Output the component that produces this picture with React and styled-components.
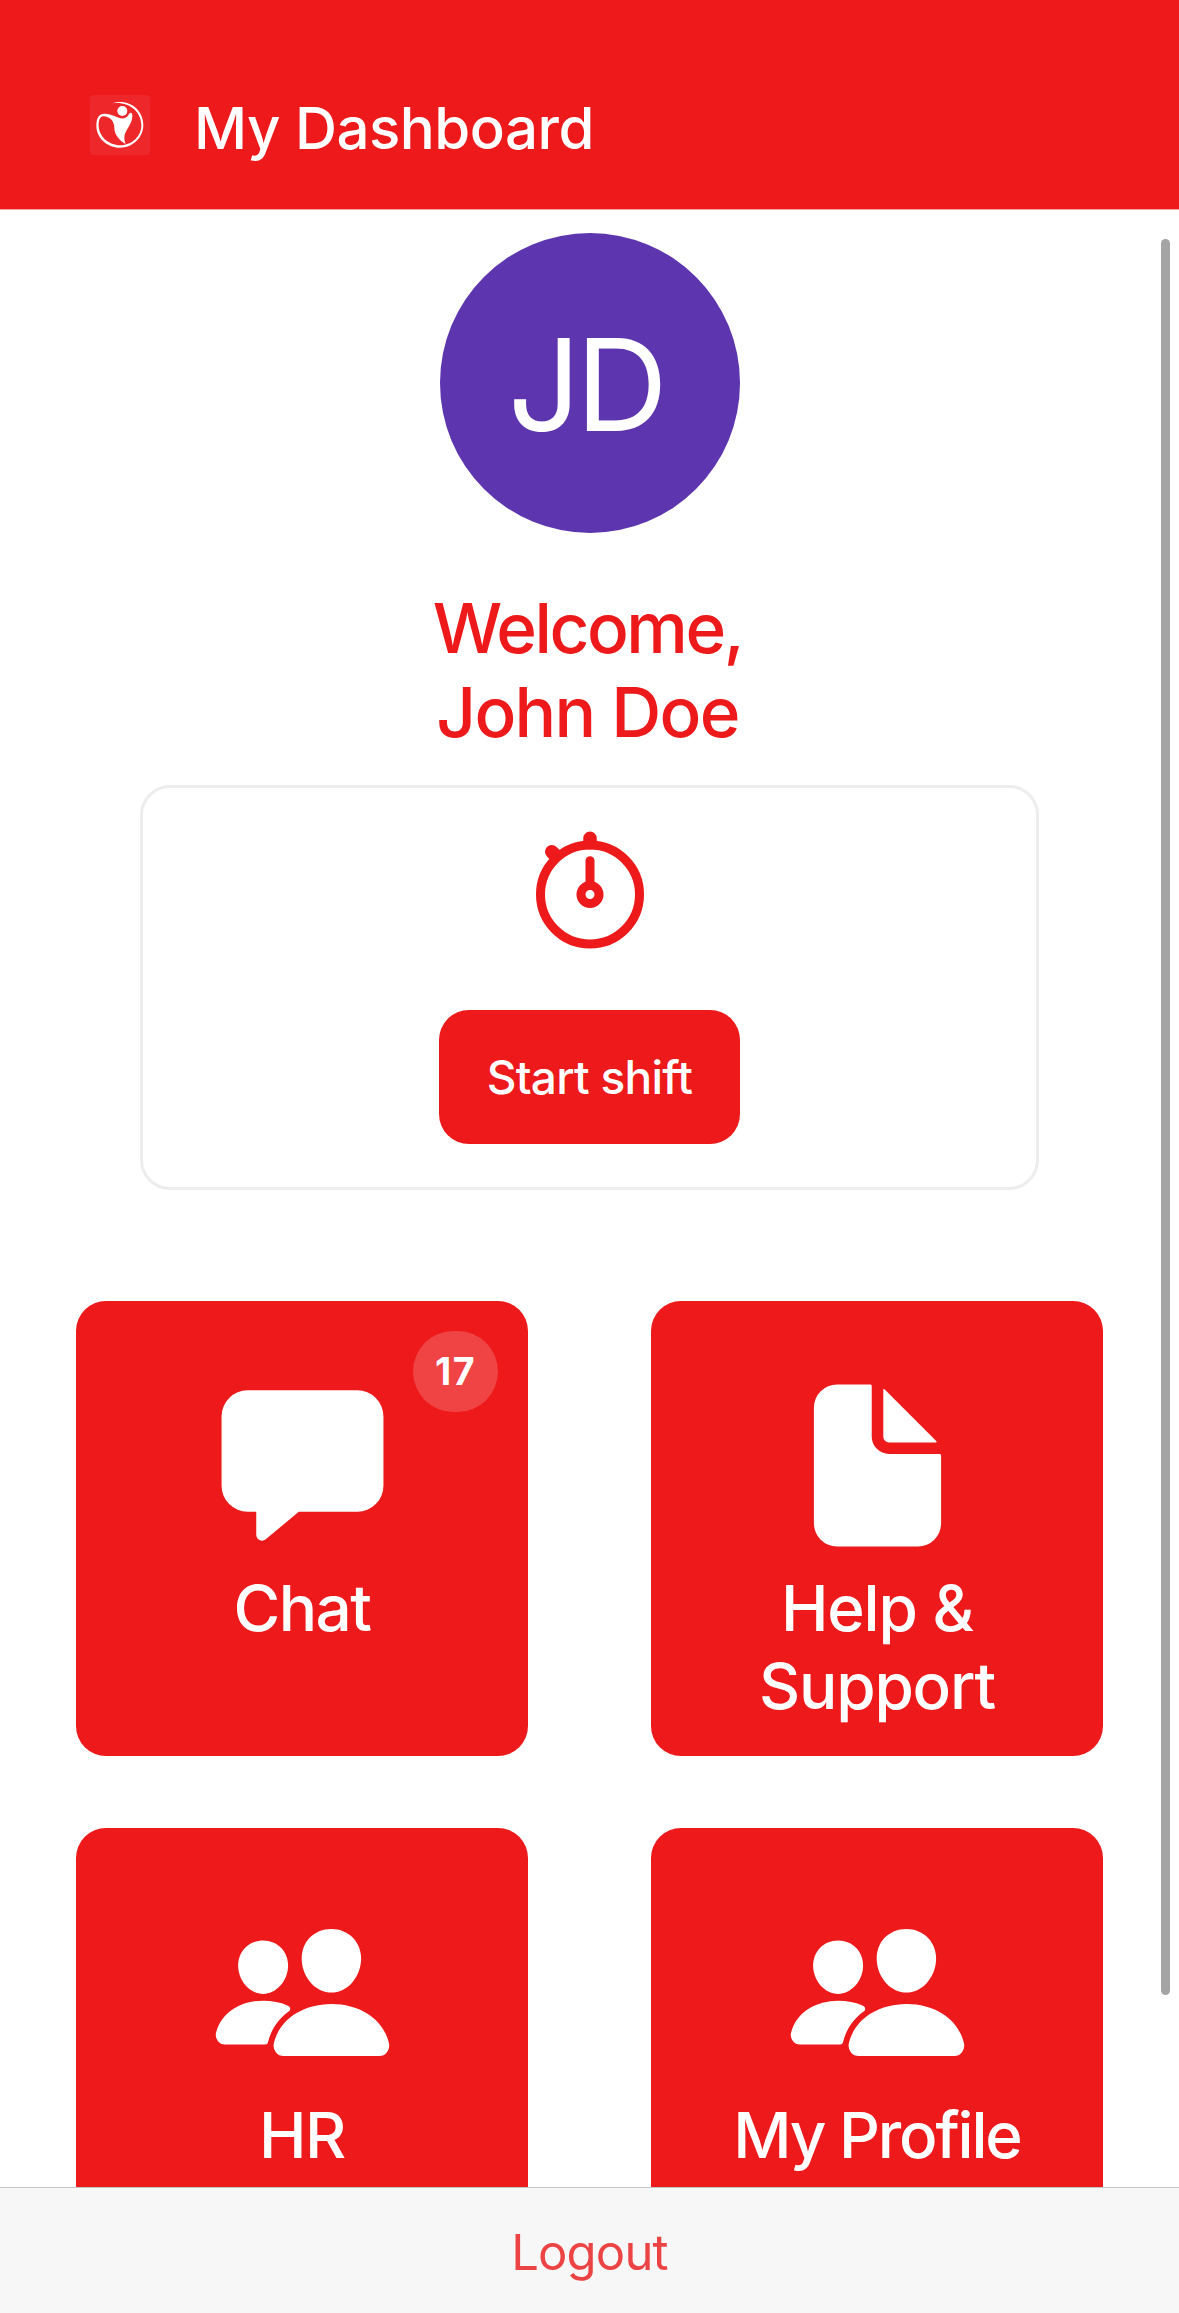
import React from 'react';
import styled, { createGlobalStyle } from 'styled-components';
import { IoChatbox, IoDocument, IoPeople, IoStopwatchOutline } from 'react-icons/io5';

const RED = '#ed191a';

const GlobalStyle = createGlobalStyle`
  * { box-sizing: border-box; }
  html, body { margin: 0; padding: 0; background: #fff; overflow: hidden; }
  body { font-family: Inter, "Liberation Sans", sans-serif; }
`;

const Screen = styled.div`
  display: flex;
  flex-direction: column;
  width: 1179px;
  height: 2313px;
  background: #fff;
  overflow: hidden;
`;

const Header = styled.header`
  flex: none;
  display: flex;
  align-items: flex-start;
  gap: 44px;
  height: 210px;
  padding: 95px 90px 0;
  background: ${RED};
  border-bottom: 1px solid #f7a3a3;
`;

const LogoTile = styled.div`
  width: 60px;
  height: 60px;
  border-radius: 4px;
  background: #ed272a;
  svg { display: block; }
`;

const Title = styled.h1`
  margin: 0;
  font-size: 58.2px;
  font-weight: 500;
  line-height: 66px;
  letter-spacing: -0.5px;
  color: #fff;
  white-space: nowrap;
`;

const Body = styled.main`
  position: relative;
  flex: 1;
  min-height: 0;
  overflow: hidden;
`;

const Content = styled.div`
  padding: 23px 76px 0;
  display: flex;
  flex-direction: column;
  align-items: center;
`;

const Avatar = styled.div`
  flex: none;
  width: 300px;
  height: 300px;
  padding: 3px 8px 0 0;
  border-radius: 50%;
  background: #5d35af;
  color: #fff;
  display: flex;
  align-items: center;
  justify-content: center;
  font-size: 127.5px;
  letter-spacing: -5px;
  line-height: 1;
`;

const Welcome = styled.h2`
  margin: 53px 0 0;
  padding-right: 4px;
  font-size: 69.3px;
  font-weight: 500;
  line-height: 84px;
  text-align: center;
  color: ${RED};
`;

const WelcomeLine = styled.span`
  display: block;
  letter-spacing: ${(p) => p.$tracking}px;
`;

const ShiftCard = styled.section`
  display: flex;
  flex-direction: column;
  align-items: center;
  width: 899px;
  height: 405px;
  margin-top: 31px;
  padding-top: 30px;
  border: 3px solid #ededed;
  border-radius: 30px;
  color: ${RED};
`;

const ShiftButton = styled.button`
  width: 301px;
  height: 134px;
  margin-top: 48px;
  padding: 0;
  border: 0;
  border-radius: 30px;
  background: ${RED};
  color: #fff;
  font: 500 46px/134px Inter, "Liberation Sans", sans-serif;
  letter-spacing: -0.75px;
  white-space: nowrap;
`;

const Tiles = styled.nav`
  display: grid;
  grid-template-columns: 452px 452px;
  column-gap: 123px;
  row-gap: 72px;
  margin-top: 111px;
`;

const Tile = styled.a`
  position: relative;
  display: flex;
  flex-direction: column;
  align-items: center;
  height: 455px;
  padding-top: 72px;
  border-radius: 30px;
  background: ${RED};
  color: #fff;
`;

const TileLabel = styled.span`
  margin-top: 11px;
  font-size: 63.8px;
  font-weight: 500;
  line-height: 78px;
  letter-spacing: ${(p) => p.$tracking}px;
  text-align: center;
  white-space: pre-line;
`;

const Badge = styled.span`
  position: absolute;
  top: 30px;
  right: 30px;
  width: 85px;
  height: 81px;
  border-radius: 41px;
  background: #f04343;
  font-size: 37.6px;
  font-weight: 700;
  line-height: 81px;
  letter-spacing: 1.5px;
  text-align: center;
`;

const ScrollThumb = styled.div`
  position: absolute;
  top: 29px;
  right: 9px;
  width: 9px;
  height: 1756px;
  border-radius: 5px;
  background: #a4a4a4;
`;

const Footer = styled.footer`
  flex: none;
  display: flex;
  justify-content: center;
  height: 126px;
  padding-top: 33px;
  border-top: 1px solid #c4c4c4;
  background: #f7f7f7;
  color: #ec4444;
  font-size: 49px;
  line-height: 64px;
  letter-spacing: -0.8px;
`;

const LogoMark = () => (
  <svg width="60" height="60" viewBox="30 30 180 180" fill="#fff" aria-hidden="true">
    <path d="M97 55 C145 40 190 73 190 120 C190 158 158 188 120 188 C81 188 49 158 49 122 C49 97 58 85 75 86 C91 86 104 94 116 98 C128 103 141 100 147 87 C151 80 158 83 157 93 C157 111 145 126 137 142 C131 154 133 168 137 177 C116 165 103 148 103 129 C103 109 91 96 73 94 C60 92 56 105 56 121 C56 154 86 181 121 181 C157 181 184 153 184 121 C184 78 145 48 97 55 Z" />
    <circle cx="127" cy="78" r="15" />
  </svg>
);

const tiles = [
  { label: 'Chat', Icon: IoChatbox, tracking: -1.5, badge: 17 },
  { label: 'Help &\nSupport', Icon: IoDocument, tracking: -1.2 },
  { label: 'HR', Icon: IoPeople, tracking: -1.5 },
  { label: 'My Profile', Icon: IoPeople, tracking: -2.2 },
];

export default function App() {
  return (
    <Screen>
      <GlobalStyle />
      <Header>
        <LogoTile><LogoMark /></LogoTile>
        <Title>My Dashboard</Title>
      </Header>
      <Body>
        <Content>
          <Avatar>JD</Avatar>
          <Welcome>
            <WelcomeLine $tracking={-2.5}>Welcome,</WelcomeLine>
            <WelcomeLine $tracking={-1.7}>John Doe</WelcomeLine>
          </Welcome>
          <ShiftCard>
            <IoStopwatchOutline size={144} />
            <ShiftButton type="button">Start shift</ShiftButton>
          </ShiftCard>
          <Tiles>
            {tiles.map(({ label, Icon, tracking, badge }) => (
              <Tile key={label}>
                <Icon size={185} />
                <TileLabel $tracking={tracking}>{label}</TileLabel>
                {badge && <Badge>{badge}</Badge>}
              </Tile>
            ))}
          </Tiles>
        </Content>
        <ScrollThumb />
      </Body>
      <Footer>Logout</Footer>
    </Screen>
  );
}
